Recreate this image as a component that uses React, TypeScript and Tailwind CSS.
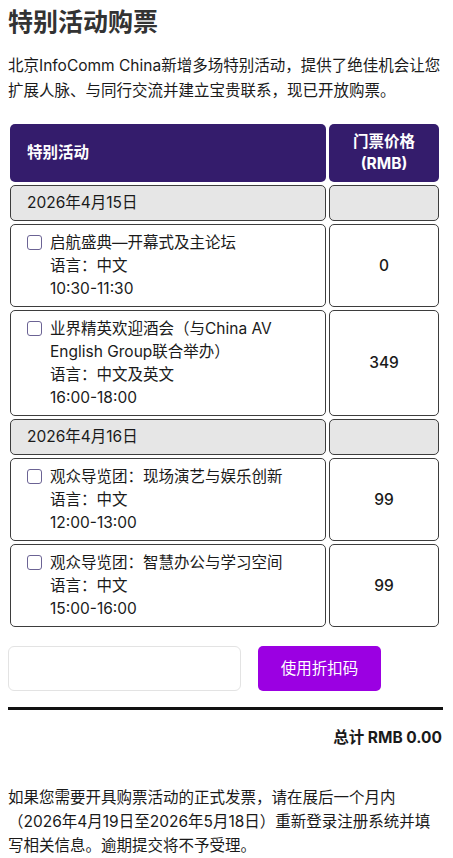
import React from "react";

const font = { fontFamily: 'Inter, "Noto Sans CJK SC", sans-serif' };

type Ev = { title: React.ReactNode; lang: string; time: string; price: string };

const day1: Ev[] = [
  { title: "启航盛典—开幕式及主论坛", lang: "语言：中文", time: "10:30-11:30", price: "0" },
  {
    title: (
      <>
        业界精英欢迎酒会（与China AV
        <br />
        English Group联合举办）
      </>
    ),
    lang: "语言：中文及英文",
    time: "16:00-18:00",
    price: "349",
  },
];
const day2: Ev[] = [
  { title: "观众导览团：现场演艺与娱乐创新", lang: "语言：中文", time: "12:00-13:00", price: "99" },
  { title: "观众导览团：智慧办公与学习空间", lang: "语言：中文", time: "15:00-16:00", price: "99" },
];

function DateRow({ d }: { d: string }) {
  return (
    <>
      <div className="rounded-[5px] border border-[#3d3d3d] bg-[#e6e6e6] pl-[16px] py-[6px] text-[15.5px] leading-[22px] text-[#1a1a1a]">
        {d}
      </div>
      <div className="rounded-[5px] border border-[#3d3d3d] bg-[#e6e6e6]" />
    </>
  );
}

function EvRow({ e }: { e: Ev }) {
  return (
    <>
      <div className="rounded-[5px] border border-[#3d3d3d] bg-white pl-[16px] py-[6px] flex text-[15.5px] leading-[23px] text-[#1a1a1a]">
        <div className="h-[23px] flex items-center shrink-0">
          <div className="w-[15px] h-[15px] rounded-[3px] border-[1.5px] border-[#6b6394] bg-white" />
        </div>
        <div className="ml-[8px]">
          <div>{e.title}</div>
          <div>{e.lang}</div>
          <div>{e.time}</div>
        </div>
      </div>
      <div className="rounded-[5px] border border-[#3d3d3d] bg-white flex items-center justify-center text-[15.5px] font-medium text-[#1a1a1a]">
        {e.price}
      </div>
    </>
  );
}

export default function App() {
  return (
    <div style={font} className="w-[453px] bg-white px-[8px] pb-[10px] text-[#1a1a1a]">
      <h1 className="pt-[6px] text-[25px] leading-[32px] font-bold text-[#333333]">特别活动购票</h1>
      <p className="mt-[15px] text-[15.5px] leading-[25px] whitespace-nowrap">
        北京InfoComm China新增多场特别活动，提供了绝佳机会让您
        <br />
        扩展人脉、与同行交流并建立宝贵联系，现已开放购票。
      </p>

      <div className="mt-[21px] ml-[2px] grid grid-cols-[316px_110px] gap-[3px]">
        <div className="rounded-[5px] bg-[#341c6c] h-[58px] flex items-center pl-[17px] text-white text-[15.5px] font-bold">
          特别活动
        </div>
        <div className="rounded-[5px] bg-[#341c6c] h-[58px] flex flex-col items-center justify-center text-white text-[15.5px] font-bold leading-[22px]">
          <div>门票价格</div>
          <div>(RMB)</div>
        </div>
        <DateRow d="2026年4月15日" />
        {day1.map((e, i) => (
          <EvRow key={i} e={e} />
        ))}
        <DateRow d="2026年4月16日" />
        {day2.map((e, i) => (
          <EvRow key={i} e={e} />
        ))}
      </div>

      <div className="mt-[19px] flex items-center">
        <input
          type="text"
          className="w-[233px] h-[45px] rounded-[6px] border border-[#e3e3e3] bg-white outline-none"
        />
        <button className="ml-[17px] w-[123px] h-[45px] rounded-[5px] bg-[#9b00e2] text-white text-[15.5px]">
          使用折扣码
        </button>
      </div>

      <div className="mt-[16px] h-[3px] bg-[#111111] mr-[2px]" />

      <div className="mt-[16px] text-right pr-[3px] text-[15.5px] font-bold leading-[24px]">总计 RMB 0.00</div>

      <p className="mt-[36px] text-[15.5px] leading-[24px] whitespace-nowrap">
        如果您需要开具购票活动的正式发票，请在展后一个月内
        <br />
        （2026年4月19日至2026年5月18日）重新登录注册系统并填
        <br />
        写相关信息。逾期提交将不予受理。
      </p>
    </div>
  );
}
